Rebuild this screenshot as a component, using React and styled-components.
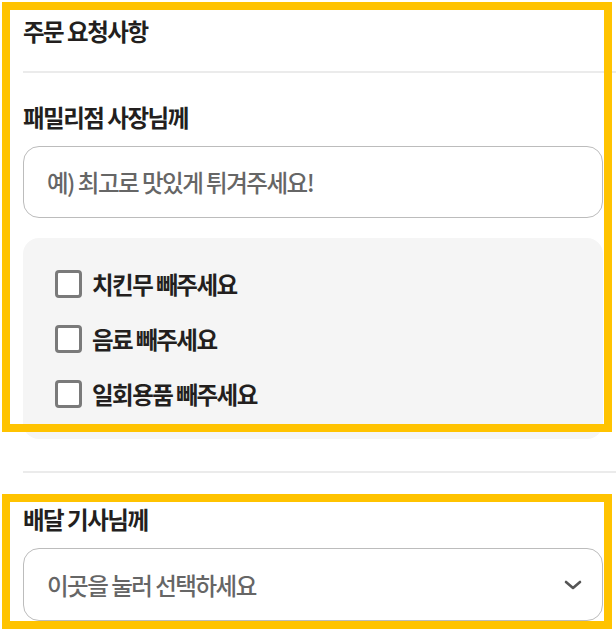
import React from 'react';
import styled, { createGlobalStyle } from 'styled-components';

const GlobalStyle = createGlobalStyle`
  * { box-sizing: border-box; }
  body {
    margin: 0;
    background: #fff;
    font-family: "Noto Sans CJK KR", "Noto Sans", sans-serif;
    color: #231f1e;
  }
`;

const Page = styled.div`
  position: relative;
  width: 616px;
  height: 642px;
  overflow: hidden;
  padding: 0 13px 0 23px;
`;

const SectionTitle = styled.h2`
  margin: 0;
  padding-top: 15px;
  height: 71px;
  font-size: 23.5px;
  font-weight: 700;
  letter-spacing: -1.5px;
  line-height: 32px;
`;

const Divider = styled.hr`
  margin: 0;
  border: none;
  height: 2px;
  background: #ebebeb;
  margin-right: -13px;
`;

const Label = styled.h3`
  margin: 0;
  padding-top: ${(p) => p.$top}px;
  font-size: 23.5px;
  font-weight: 700;
  letter-spacing: -1.5px;
  line-height: 32px;
  height: ${(p) => p.$top + 45}px;
`;

const TextInput = styled.input`
  display: block;
  width: 100%;
  height: 72px;
  border: 1.5px solid #bcbcbc;
  border-radius: 16px;
  padding: 0 0 0 23px;
  font-family: inherit;
  font-size: 23.5px;
  font-weight: 500;
  letter-spacing: -1.5px;
  outline: none;
  &::placeholder { color: #666; }
`;

const OptionPanel = styled.div`
  margin-top: 20px;
  background: #f5f5f5;
  border-radius: 16px;
  padding: 18px 0 18px 32px;
`;

const OptionRow = styled.label`
  display: flex;
  align-items: center;
  gap: 10px;
  height: 55px;
  font-size: 23.5px;
  font-weight: 700;
  letter-spacing: -1.5px;
`;

const Box = styled.span`
  width: 27px;
  height: 28px;
  border: 3px solid #7a7a7a;
  border-radius: 4px;
  background: #fff;
`;

const BottomDivider = styled(Divider)`
  margin-top: 32px;
`;

const Select = styled.div`
  display: flex;
  align-items: center;
  justify-content: space-between;
  height: 73px;
  border: 1.5px solid #bcbcbc;
  border-radius: 16px;
  padding: 0 20px 0 23px;
  font-size: 23.5px;
  font-weight: 500;
  letter-spacing: -1.5px;
  color: #666;
`;

const Highlight = styled.div`
  position: absolute;
  left: 2px;
  top: ${(p) => p.$top}px;
  width: 610px;
  height: ${(p) => p.$h}px;
  border: 8px solid #ffc300;
  pointer-events: none;
`;

const Chevron = () => (
  <svg width="18" height="12" viewBox="0 0 18 12" fill="none">
    <path d="M2 3l7 6 7-6" stroke="#555" strokeWidth="2.6" strokeLinecap="round" strokeLinejoin="round" />
  </svg>
);

const options = ['치킨무 빼주세요', '음료 빼주세요', '일회용품 빼주세요'];

export default function App() {
  return (
    <>
      <GlobalStyle />
      <Page>
        <SectionTitle>주문 요청사항</SectionTitle>
        <Divider />
        <Label $top={28}>패밀리점 사장님께</Label>
        <TextInput placeholder="예) 최고로 맛있게 튀겨주세요!" />
        <OptionPanel>
          {options.map((o) => (
            <OptionRow key={o}>
              <Box />
              {o}
            </OptionRow>
          ))}
        </OptionPanel>
        <BottomDivider />
        <Label $top={30}>배달 기사님께</Label>
        <Select>
          이곳을 눌러 선택하세요
          <Chevron />
        </Select>
        <Highlight $top={2} $h={430} />
        <Highlight $top={494} $h={135} />
      </Page>
    </>
  );
}
